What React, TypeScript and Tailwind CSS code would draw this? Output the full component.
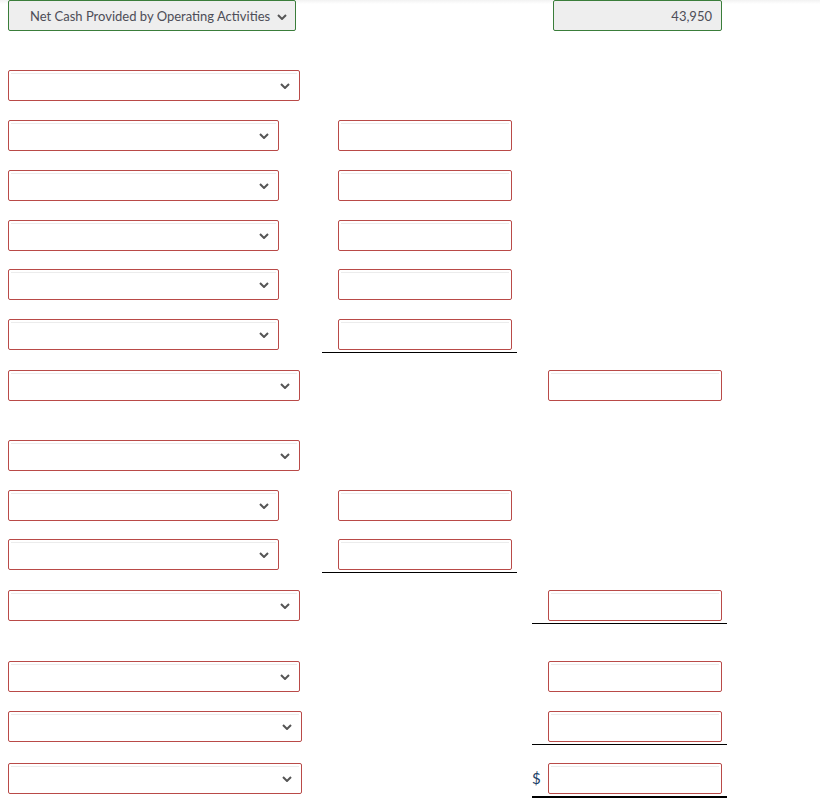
import React from 'react';

type Row = {
  mt: string;
  sel: string; // select width class
  b?: 'input' | 'under';
  c?: 'input' | 'under' | 'total';
};

const rows: Row[] = [
  { mt: 'mt-[39px]', sel: 'w-[292px]' },
  { mt: 'mt-[19px]', sel: 'w-[271px]', b: 'input' },
  { mt: 'mt-[19px]', sel: 'w-[271px]', b: 'input' },
  { mt: 'mt-[19px]', sel: 'w-[271px]', b: 'input' },
  { mt: 'mt-[18px]', sel: 'w-[271px]', b: 'input' },
  { mt: 'mt-[19px]', sel: 'w-[271px]', b: 'under' },
  { mt: 'mt-[17px]', sel: 'w-[292px]', c: 'input' },
  { mt: 'mt-[39px]', sel: 'w-[292px]' },
  { mt: 'mt-[19px]', sel: 'w-[271px]', b: 'input' },
  { mt: 'mt-[18px]', sel: 'w-[271px]', b: 'under' },
  { mt: 'mt-[17px]', sel: 'w-[292px]', c: 'under' },
  { mt: 'mt-[37px]', sel: 'w-[292px]', c: 'input' },
  { mt: 'mt-[19px]', sel: 'w-[294px]', c: 'under' },
  { mt: 'mt-[18px]', sel: 'w-[294px]', c: 'total' },
];

const field =
  'h-[31px] rounded-[2px] border border-[#b94a48] bg-white shadow-[inset_0_0_0_2px_#fff,inset_0_3px_0_0_#ececec]';

const Chevron = () => (
  <svg width="10" height="6" viewBox="0 0 10 6" fill="none">
    <path d="M1 1 L5 5 L9 1" stroke="#555" strokeWidth="2" />
  </svg>
);

const Select = ({ w }: { w: string }) => (
  <div className={`${field} ${w} flex items-center justify-end pr-[9px]`}>
    <Chevron />
  </div>
);

const Cell = ({ kind }: { kind?: 'input' | 'under' | 'total' }) => {
  if (!kind) return <div className="w-[195px]" />;
  if (kind === 'input')
    return (
      <div className="w-[195px] pl-[16px]">
        <div className={`${field} w-[174px]`} />
      </div>
    );
  if (kind === 'under')
    return (
      <div className="w-[195px] pl-[16px] pb-[2px] border-b border-black">
        <div className={`${field} w-[174px]`} />
      </div>
    );
  return (
    <div className="w-[195px] flex items-center pb-[2px] border-b-2 border-black">
      <span className="w-[16px] text-[15px] text-[#1d3f66]">$</span>
      <div className={`${field} w-[174px]`} />
    </div>
  );
};

export default function App() {
  return (
    <div className="min-h-[806px] w-[820px] bg-[linear-gradient(#f2f2f2,#fff_4px)] font-['Lato',sans-serif] text-[#4d4d57]">
      {/* total line of operating section */}
      <div className="flex items-start pl-[8px]">
        <div className="w-[314px]">
          <div className="h-[31px] w-[288px] rounded-[2px] border border-[#3a7d3a] bg-[#eee] flex items-center justify-between pl-[21px] pr-[8px] pt-[2px] text-[13px]">
            <span>Net Cash Provided by Operating Activities</span>
            <Chevron />
          </div>
        </div>
        <div className="w-[210px]" />
        <div className="w-[195px] pl-[21px]">
          <div className="h-[31px] w-[169px] rounded-[2px] border border-[#3a7d3a] bg-[#eee] flex items-center justify-end pr-[9px] pt-[2px] text-[13px]">
            43,950
          </div>
        </div>
      </div>

      {rows.map((r, i) => (
        <div key={i} className={`${r.mt} flex items-start pl-[8px]`}>
          <div className="w-[314px]">
            <Select w={r.sel} />
          </div>
          <Cell kind={r.b} />
          <div className="w-[15px]" />
          <Cell kind={r.c} />
        </div>
      ))}
    </div>
  );
}
